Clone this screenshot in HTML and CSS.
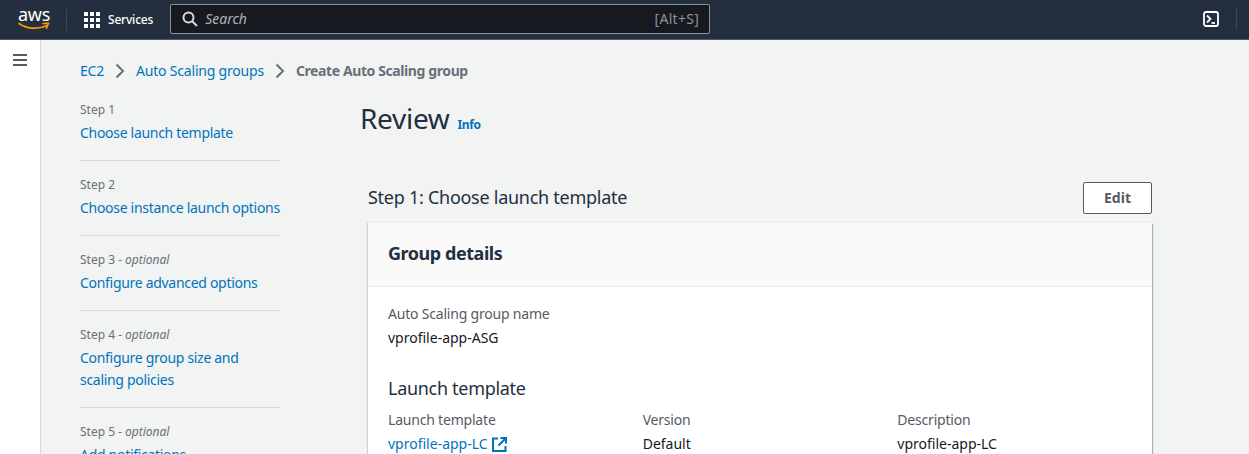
FILE: index.html
```html
<!DOCTYPE html>
<html lang="en">
<head>
<meta charset="utf-8">
<title>Create Auto Scaling group</title>
<link rel="stylesheet" href="styles.css">
</head>
<body>
<header class="topnav">
  <a class="logo" href="#" aria-label="AWS">
    <span class="logo-word">aws</span>
    <svg class="logo-smile" width="32" height="9" viewBox="0 0 32 9"><path d="M1 1.500C8 6.500 20 8 29 3.600" fill="none" stroke="#f90" stroke-width="1.700" stroke-linecap="round"/><path d="M25 1.600 30.600 1.200 28.400 6.400" fill="none" stroke="#f90" stroke-width="1.500" stroke-linejoin="round" stroke-linecap="round"/></svg>
  </a>
  <span class="nav-sep"></span>
  <svg class="grid-icon" width="16" height="16" viewBox="0 0 16 16" fill="#fff"><rect x="0" y="0" width="4" height="4"/><rect x="6" y="0" width="4" height="4"/><rect x="12" y="0" width="4" height="4"/><rect x="0" y="6" width="4" height="4"/><rect x="6" y="6" width="4" height="4"/><rect x="12" y="6" width="4" height="4"/><rect x="0" y="12" width="4" height="4"/><rect x="6" y="12" width="4" height="4"/><rect x="12" y="12" width="4" height="4"/></svg>
  <span class="services">Services</span>
  <div class="search">
    <svg width="16" height="16" viewBox="0 0 16 16" fill="none" stroke="#d5dbdb" stroke-width="2"><circle cx="6.500" cy="6.500" r="5"/><path d="M10.200 10.200 15 15"/></svg>
    <span class="search-text">Search</span>
    <span class="search-key">[Alt+S]</span>
  </div>
  <div class="nav-right">
    <svg width="16" height="16" viewBox="0 0 16 16" fill="none" stroke="#fff" stroke-width="1.800"><rect x="1" y="1" width="14" height="14" rx="2"/><path d="M4 4.500 7.500 8 4 11.500"/><path d="M8.500 12H12"/></svg>
    <span class="nav-sep-right"></span>
  </div>
</header>
<div class="shell">
  <aside class="rail">
    <svg width="14" height="12" viewBox="0 0 14 12" stroke="#545b64" stroke-width="2"><path d="M0 1h14M0 6h14M0 11h14"/></svg>
  </aside>
  <main class="main">
    <nav class="crumbs">
      <a href="#">EC2</a>
      <svg class="chev" width="10" height="16" viewBox="0 0 10 16" fill="none" stroke="#687078" stroke-width="2"><path d="M1.500 1.500 8 8l-6.500 6.500"/></svg>
      <a href="#">Auto Scaling groups</a>
      <svg class="chev" width="10" height="16" viewBox="0 0 10 16" fill="none" stroke="#687078" stroke-width="2"><path d="M1.500 1.500 8 8l-6.500 6.500"/></svg>
      <span class="crumb-current">Create Auto Scaling group</span>
    </nav>
    <div class="wizard">
      <ol class="steps">
        <li class="step"><small>Step 1</small><a href="#">Choose launch template</a></li>
        <li class="step"><small>Step 2</small><a class="one-line" href="#">Choose instance launch options</a></li>
        <li class="step"><small>Step 3 <i>- optional</i></small><a href="#">Configure advanced options</a></li>
        <li class="step"><small>Step 4 <i>- optional</i></small><a href="#">Configure group size and scaling policies</a></li>
        <li class="step"><small>Step 5 <i>- optional</i></small><a href="#">Add notifications</a></li>
      </ol>
      <section class="content">
        <div class="page-head">
          <h1>Review</h1>
          <a class="info" href="#">Info</a>
        </div>
        <div class="section-head">
          <h2>Step 1: Choose launch template</h2>
          <button class="edit" type="button">Edit</button>
        </div>
        <div class="card">
          <div class="card-head">Group details</div>
          <div class="card-body">
            <div class="label">Auto Scaling group name</div>
            <div class="value">vprofile-app-ASG</div>
            <h3>Launch template</h3>
            <div class="cols">
              <div>
                <div class="label">Launch template</div>
                <a class="value-link" href="#">vprofile-app-LC
                  <svg width="15" height="15" viewBox="0 0 15 15" fill="none" stroke="#0073bb" stroke-width="2"><path d="M6 1.500H1V14h12.500V9"/><path d="M8.500 1H14v5.500"/><path d="M14 1 6.500 8.500"/></svg>
                </a>
              </div>
              <div>
                <div class="label">Version</div>
                <div class="value">Default</div>
              </div>
              <div>
                <div class="label">Description</div>
                <div class="value">vprofile-app-LC</div>
              </div>
            </div>
          </div>
        </div>
      </section>
    </div>
  </main>
</div>
</body>
</html>
```
FILE: styles.css
```css
* { box-sizing: border-box; }
html, body { margin: 0; height: 454px; overflow: hidden; }
body { font-family: "Noto Sans", "Open Sans", sans-serif; font-size: 14px; line-height: 22px; color: #16191f; background: #f2f3f3; }
a { color: #0073bb; text-decoration: none; }

.topnav { height: 40px; background: #232f3e; border-bottom: 1px solid #545b64; display: flex; align-items: center; padding-left: 18px; }
.logo { position: relative; width: 32px; height: 30px; display: block; margin-top: -1px; }
.logo-word { display: block; color: #fff; font-size: 18px; line-height: 20px; letter-spacing: -.3px; text-align: center; }
.logo-smile { position: absolute; left: 0; top: 18px; }
.nav-sep { width: 1px; height: 22px; background: #414750; margin-left: 16px; margin-right: 17px; }
.grid-icon { flex: none; }
.services { color: #fff; font-size: 12px; font-weight: 500; letter-spacing: -.2px; margin-left: 8px; margin-right: 17px; }
.search { width: 540px; height: 30px; margin-top: -1px; background: #16191f; border: 1px solid #879596; border-radius: 2px; display: flex; align-items: center; padding: 0 10px 0 11px; }
.search-text { color: #aab7b8; font-style: italic; font-size: 14px; margin-left: 7px; flex: 1; }
.search-key { color: #879596; font-size: 14px; letter-spacing: .3px; }
.nav-right { margin-left: auto; display: flex; align-items: center; margin-top: -1px; }
.nav-sep-right { width: 1px; height: 22px; background: #414750; margin-left: 17px; margin-right: 12px; }

.shell { display: flex; height: 414px; }
.rail { width: 41px; flex: none; background: #fff; border-right: 1px solid #d5dbdb; padding: 14px 0 0 13px; }
.rail svg { display: block; }
.main { flex: 1; min-width: 0; padding: 20px 0 0 39px; }
.crumbs { display: flex; align-items: center; height: 22px; letter-spacing: -.2px; }
.chev { margin: 0 11px; }
.crumb-current { color: #687078; font-weight: 700; letter-spacing: -.4px; }

.wizard { display: flex; margin-top: 20px; }
.steps { list-style: none; margin: 0; padding: 0; width: 200px; flex: none; }
.step { border-bottom: 1px solid #d5dbdb; padding-bottom: 16px; margin-bottom: 16px; }
.step:last-child { border-bottom: 0; }
.step small { display: block; color: #687078; font-size: 12px; line-height: 16px; margin-bottom: 4px; }
.step a { display: block; letter-spacing: -.3px; }
.step a.one-line { white-space: nowrap; }

.content { width: 792px; margin-left: 80px; }
.page-head { display: flex; align-items: baseline; height: 32px; margin-top: -2px; }
h1 { margin: 0; font-size: 28px; font-weight: 400; line-height: 36px; letter-spacing: -.3px; color: #232f3e; }
.info { font-size: 12px; font-weight: 700; margin-left: 8px; letter-spacing: -.4px; }
.section-head { display: flex; justify-content: space-between; align-items: flex-start; margin: 50px 0 9px 8px; }
h2 { margin: 0; font-size: 18px; font-weight: 400; line-height: 30px; color: #232f3e; letter-spacing: -.27px; }
.edit { width: 69px; height: 32px; background: #fff; border: 1px solid #545b64; border-radius: 2px; font: 700 14px/20px "Noto Sans", sans-serif; color: #545b64; padding: 0; }
.card { margin-left: 8px; width: 784px; background: #fff; box-shadow: 1px 1px 1px rgba(0,28,36,.3), -1px 0 1px rgba(0,28,36,.15); }
.card-head { height: 64px; background: #fafafa; border-bottom: 1px solid #eaeded; padding: 0 20px; font-size: 18px; font-weight: 700; line-height: 60px; letter-spacing: -.45px; color: #232f3e; }
.card-body { padding: 16px 20px 60px; }
.label { color: #545b64; line-height: 22px; letter-spacing: -.2px; }
.value { line-height: 22px; margin-top: 2px; }
h3 { margin: 28px 0 10px; font-size: 18px; font-weight: 400; line-height: 22px; letter-spacing: -.3px; color: #232f3e; }
.cols { display: grid; grid-template-columns: repeat(3, 1fr); width: 764px; }
.value-link { display: flex; align-items: center; gap: 4px; line-height: 22px; margin-top: 2px; }
```
